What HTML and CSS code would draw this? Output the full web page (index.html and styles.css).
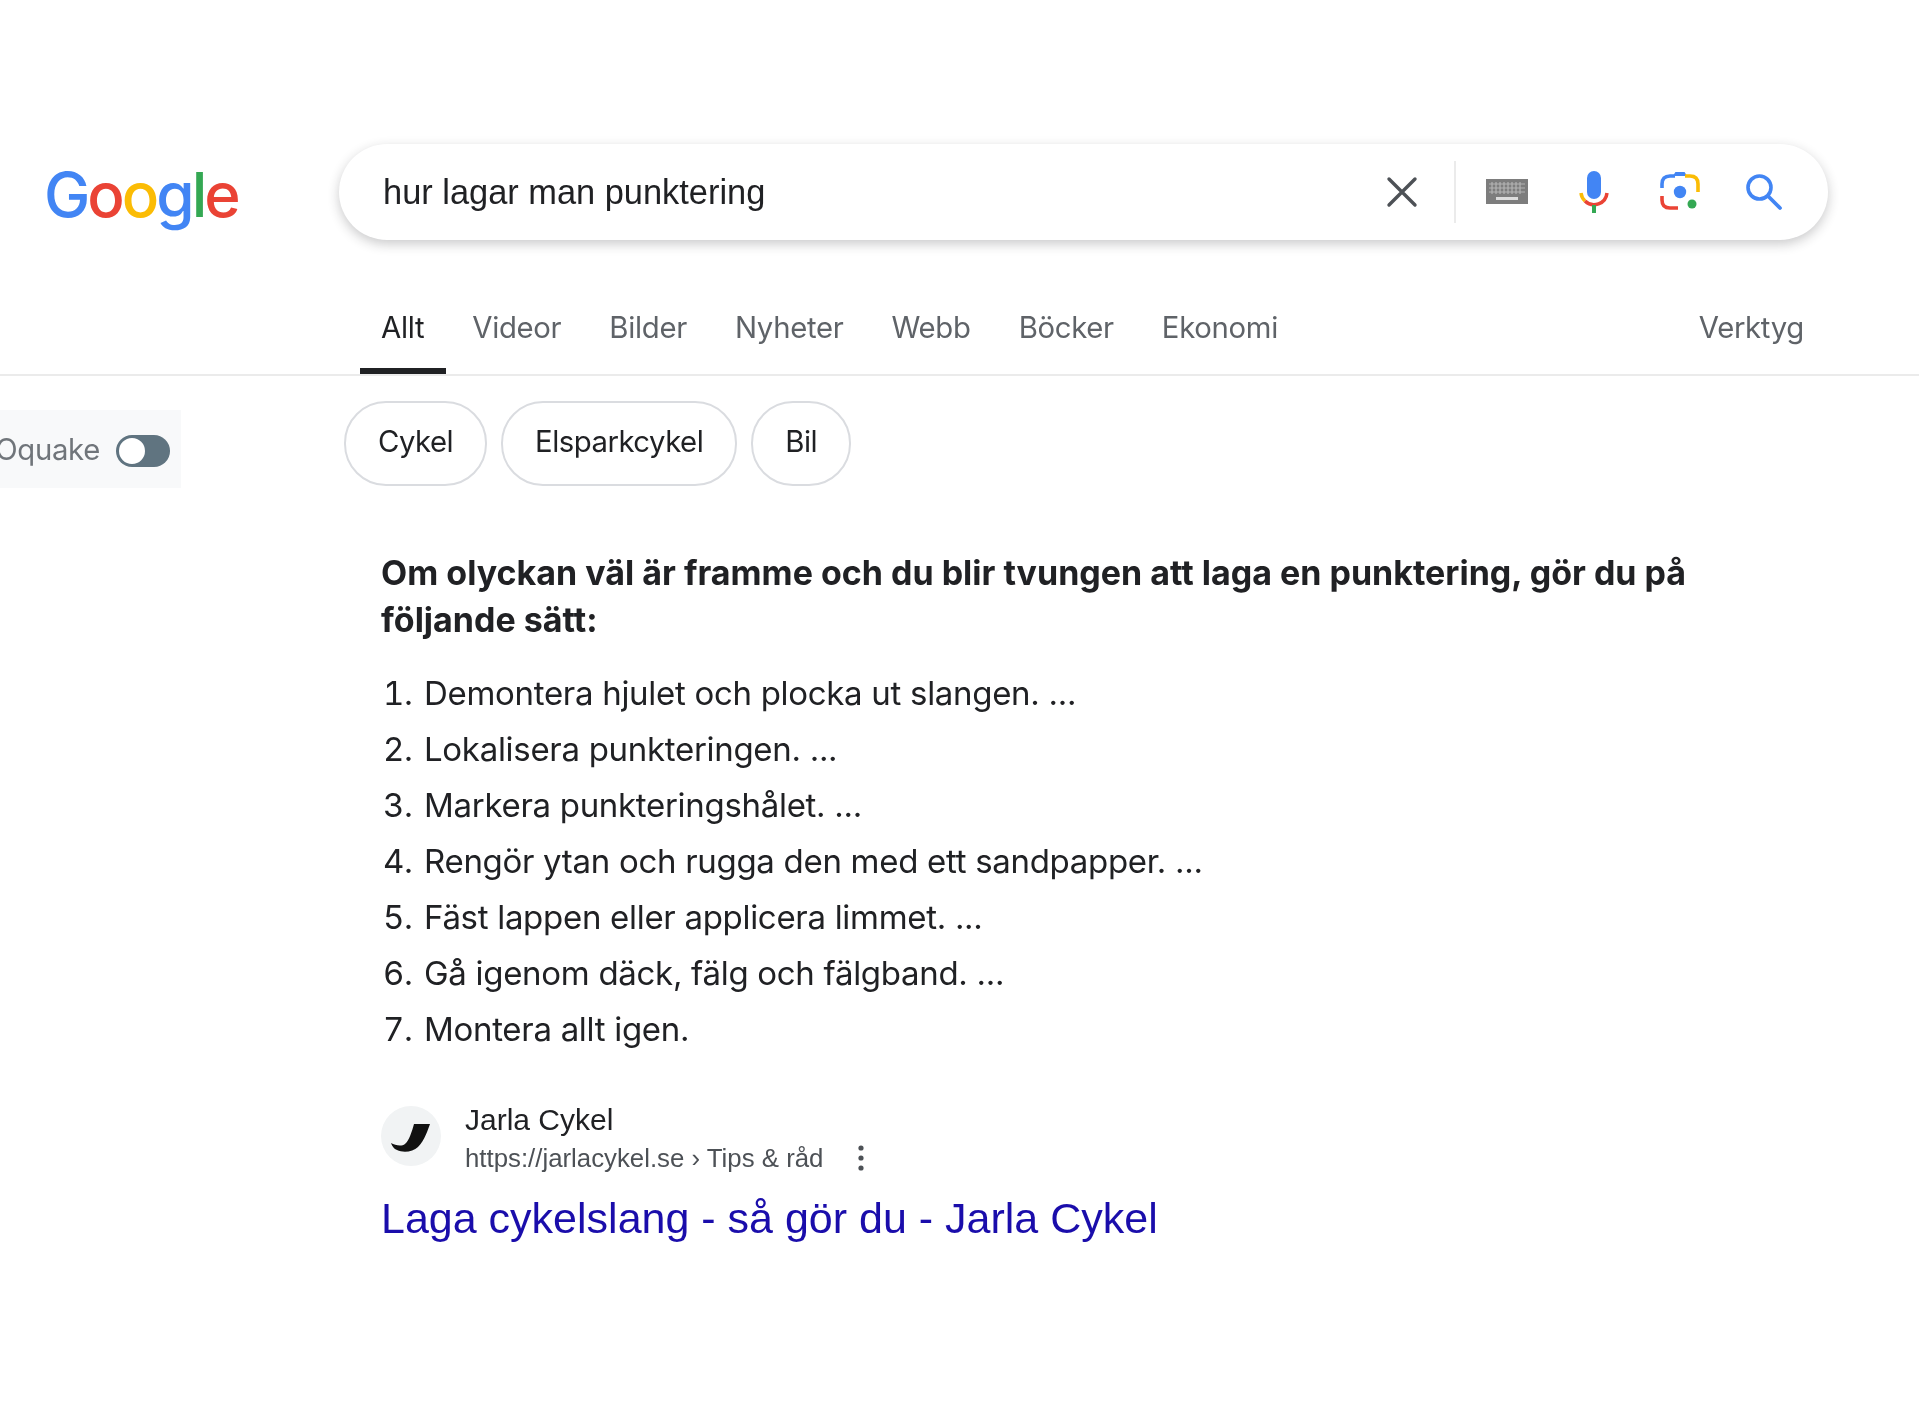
FILE: index.html
```html
<!DOCTYPE html>
<html lang="sv">
<head>
  <meta charset="UTF-8">
  <meta name="viewport" content="width=device-width, initial-scale=1.0">
  <title>hur lagar man punktering - Google Sök</title>
  <link rel="stylesheet" href="styles.css">
</head>
<body>
  <header class="top">
    <div class="logo"><span class="c-blue">G</span><span class="c-red">o</span><span class="c-yellow">o</span><span class="c-blue">g</span><span class="c-green">l</span><span class="c-red">e</span></div>
    <div class="searchbox">
      <span class="query">hur lagar man punktering</span>
      <svg class="icon-clear" viewBox="0 0 32 32"><path d="M3 3 29 29M29 3 3 29" fill="none" stroke="#4d5156" stroke-width="3.4" stroke-linecap="round"/></svg>
      <span class="sep"></span>
      <svg class="icon-kbd" viewBox="0 0 42 26">
        <rect width="42" height="25" fill="#7d7d7d"/>
        <path d="M3 5H39M3 9H39M3 13H39M6 3V15M10 3V15M14 3V15M18 3V15M22 3V15M26 3V15M30 3V15M34 3V15" stroke="#b4b4b4" stroke-width="1.2" fill="none"/>
        <rect x="10" y="18" width="22" height="3" fill="#dcdcdc"/>
      </svg>
      <svg class="icon-mic" viewBox="0 0 32 44">
        <rect x="9" y="1" width="14" height="28" rx="7" fill="#4285f4"/>
        <path d="M3 23A13 13 0 0 0 7 31" fill="none" stroke="#fbbc05" stroke-width="3.5"/>
        <path d="M7 31A13 13 0 0 0 29 23" fill="none" stroke="#ea4335" stroke-width="3.5"/>
        <rect x="14" y="35" width="4" height="8" fill="#34a853"/>
      </svg>
      <svg class="icon-lens" viewBox="0 0 42 42">
        <path d="M15 5 17 2H25L27 5" fill="#4285f4" stroke="#4285f4" stroke-width="2"/>
        <path d="M3 17V13Q3 5 11 5H16" fill="none" stroke="#4285f4" stroke-width="3.6"/>
        <path d="M26 5H31Q39 5 39 13V21" fill="none" stroke="#fbbc05" stroke-width="3.6"/>
        <path d="M3 25V29Q3 37 11 37H19" fill="none" stroke="#ea4335" stroke-width="3.6"/>
        <circle cx="21" cy="21" r="6.2" fill="#4285f4"/>
        <circle cx="33" cy="33" r="4.5" fill="#34a853"/>
      </svg>
      <svg class="icon-search" viewBox="0 0 38 38"><circle cx="14.5" cy="14.5" r="11.5" fill="none" stroke="#4285f4" stroke-width="3.6"/><path d="M23 23 35 35" stroke="#4285f4" stroke-width="3.8" stroke-linecap="round"/></svg>
    </div>
  </header>

  <nav class="tabs">
    <a class="tab active">Allt</a>
    <a class="tab">Videor</a>
    <a class="tab">Bilder</a>
    <a class="tab">Nyheter</a>
    <a class="tab">Webb</a>
    <a class="tab">Böcker</a>
    <a class="tab">Ekonomi</a>
    <a class="tab tools">Verktyg</a>
  </nav>

  <div class="filters">
    <div class="ext-box">
      <span class="ext-label">Oquake</span>
      <span class="toggle"><span class="knob"></span></span>
    </div>
    <div class="chips">
      <span class="chip">Cykel</span>
      <span class="chip">Elsparkcykel</span>
      <span class="chip">Bil</span>
    </div>
  </div>

  <main class="snippet">
    <p class="lead">Om olyckan väl är framme och du blir tvungen att laga en punktering, gör du på följande sätt:</p>
    <ol class="steps">
      <li>Demontera hjulet och plocka ut slangen. ...</li>
      <li>Lokalisera punkteringen. ...</li>
      <li>Markera punkteringshålet. ...</li>
      <li>Rengör ytan och rugga den med ett sandpapper. ...</li>
      <li>Fäst lappen eller applicera limmet. ...</li>
      <li>Gå igenom däck, fälg och fälgband. ...</li>
      <li>Montera allt igen.</li>
    </ol>
    <div class="source">
      <span class="favicon">
        <svg viewBox="0 0 60 60"><path d="M33 18 49 18C47 23 44 34 37 41 32 46 22 47 16 44 13 43 11 40 10 37 14 39 20 41 24 38 28 35 31 25 33 18Z" fill="#111"/></svg>
      </span>
      <div class="source-text">
        <div class="site">Jarla Cykel</div>
        <div class="url-row">
          <span class="url">https://jarlacykel.se › Tips &amp; råd</span>
          <svg class="dots" viewBox="0 0 6 26"><circle cx="3" cy="3" r="2.6"/><circle cx="3" cy="13" r="2.6"/><circle cx="3" cy="23" r="2.6"/></svg>
        </div>
      </div>
    </div>
    <a class="result-title">Laga cykelslang - så gör du - Jarla Cykel</a>
  </main>
</body>
</html>
```

FILE: styles.css
```css
* {
  margin: 0;
  padding: 0;
  box-sizing: border-box;
}

body {
  font-family: "Liberation Sans", Arial, sans-serif;
  background: #fff;
  color: #202124;
  height: 1421px;
  overflow: hidden;
  filter: blur(0.5px);
}

.top {
  display: flex;
  align-items: center;
  padding: 144px 0 0 44px;
}

.logo {
  width: 295px;
  height: 96px;
  padding-top: 3px;
  font-family: Inter, sans-serif;
  font-weight: 500;
  font-size: 62px;
  line-height: 96px;
  letter-spacing: -3px;
}

.c-blue { color: #4285f4; }
.c-red { color: #ea4335; }
.c-yellow { color: #fbbc05; }
.c-green { color: #34a853; }

.searchbox {
  display: flex;
  align-items: center;
  width: 1489px;
  height: 96px;
  padding: 0 45.5px 0 44px;
  background: #fff;
  border-radius: 48px;
  box-shadow: 0 4px 12px rgba(32, 33, 36, 0.24);
}

.query {
  flex: 1;
  font-size: 34.4px;
  color: #202124;
}

.icon-clear { width: 32px; height: 32px; }

.sep {
  width: 2px;
  height: 62px;
  margin: 0 30px 0 36px;
  background: #ebebeb;
}

.icon-kbd { width: 42px; height: 26px; }
.icon-mic { width: 32px; height: 44px; margin-left: 50px; }
.icon-lens { width: 42px; height: 42px; margin-left: 49px; }
.icon-search { width: 38px; height: 38px; margin-left: 44px; }

.tabs {
  display: flex;
  height: 90px;
  margin-top: 46px;
  padding: 0 115px 0 381px;
  gap: 48px;
  border-bottom: 2px solid #ebebeb;
  font-family: Inter, sans-serif;
  font-size: 29.3px;
  letter-spacing: -0.3px;
  color: #5f6368;
}

.tab {
  position: relative;
  line-height: 84px;
}

.tab.active {
  color: #202124;
}

.tab.active::after {
  content: "";
  position: absolute;
  left: -21px;
  right: -22px;
  bottom: 0;
  height: 6px;
  background: #202124;
}

.tab.tools {
  margin-left: auto;
}

.filters {
  display: flex;
  align-items: flex-start;
  padding-top: 25px;
}

.ext-box {
  display: flex;
  align-items: center;
  justify-content: flex-end;
  gap: 16px;
  width: 181px;
  height: 78px;
  margin-top: 9px;
  padding-right: 11px;
  overflow: hidden;
  background: #f8f9fa;
  white-space: nowrap;
  font-family: Inter, sans-serif;
  font-size: 29.3px;
  letter-spacing: -0.3px;
  color: #70757a;
}

.toggle {
  position: relative;
  flex: none;
  width: 54px;
  height: 32px;
  margin-top: 4px;
  border-radius: 16px;
  background: #607480;
}

.knob {
  position: absolute;
  left: 1px;
  top: 1px;
  width: 30px;
  height: 30px;
  border: 2px solid #607480;
  border-radius: 50%;
  background: #fff;
}

.chips {
  display: flex;
  gap: 14px;
  margin-left: 163px;
}

.chip {
  height: 85px;
  padding: 0 32px;
  border: 2px solid #dadce0;
  border-radius: 42px;
  font-family: Inter, sans-serif;
  font-size: 29.3px;
  letter-spacing: -0.5px;
  line-height: 78px;
  color: #202124;
}

.snippet {
  padding: 62px 0 0 381px;
}

.lead {
  width: 1340px;
  font-family: Inter, sans-serif;
  font-size: 34px;
  font-weight: 700;
  line-height: 46.5px;
  color: #202124;
}

.steps {
  margin-top: 22px;
  list-style: none;
  counter-reset: step;
  font-family: Inter, sans-serif;
  font-size: 33px;
  letter-spacing: -0.3px;
  line-height: 56px;
}

.steps li {
  display: flex;
  counter-increment: step;
}

.steps li::before {
  content: counter(step) ".";
  width: 41px;
  padding-left: 2px;
  font-variant-numeric: tabular-nums;
}

.source {
  display: flex;
  align-items: center;
  gap: 24px;
  margin-top: 43px;
}

.favicon {
  display: block;
  width: 60px;
  height: 60px;
  margin-bottom: 5px;
  border-radius: 50%;
  background: #f1f3f4;
}

.favicon svg {
  display: block;
  width: 60px;
  height: 60px;
}

.site {
  font-size: 30px;
  line-height: 39px;
  color: #202124;
}

.url-row {
  display: flex;
  align-items: center;
  gap: 35px;
}

.url {
  font-size: 25.8px;
  line-height: 38px;
  color: #4d5156;
}

.dots {
  width: 6px;
  height: 26px;
  fill: #4d5156;
}

.result-title {
  display: block;
  margin-top: 14px;
  font-size: 43px;
  line-height: 54px;
  color: #1a0dab;
}
```
